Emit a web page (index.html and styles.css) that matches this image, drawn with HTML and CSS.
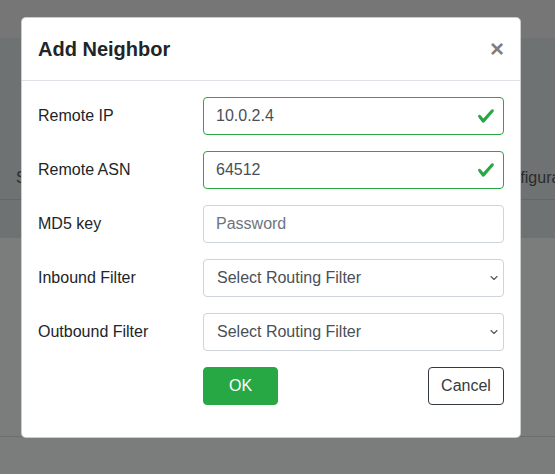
FILE: index.html
```html
<!DOCTYPE html>
<html lang="en">
<head>
<meta charset="utf-8">
<title>Add Neighbor</title>
<link rel="stylesheet" href="styles.css">
</head>
<body>
<div class="page">
  <div class="topbar"></div>
  <div class="hero">
    <div class="tabs">
      <span class="tab tab-first">Sessions</span>
      <span class="tab">Configuration</span>
    </div>
  </div>
  <div class="subbar"></div>
  <div class="lower"></div>
  <div class="footer"></div>
</div>

<div class="modal">
  <div class="modal-header">
    <h5 class="modal-title">Add Neighbor</h5>
    <button class="close" type="button">&times;</button>
  </div>
  <div class="modal-body">
    <div class="form-row">
      <label class="col-label">Remote IP</label>
      <div class="field">
        <input class="form-control is-valid" type="text" value="10.0.2.4">
        <svg class="valid-icon" viewBox="0 0 8 8" width="18" height="18"><path fill="#28a745" d="M2.3 6.73L.6 4.53c-.4-1.04.46-1.4 1.1-.8l1.1 1.4 3.4-3.8c.6-.63 1.6-.27 1.2.7l-4 4.6c-.43.5-.8.4-1.1.1z"/></svg>
      </div>
    </div>
    <div class="form-row">
      <label class="col-label">Remote ASN</label>
      <div class="field">
        <input class="form-control is-valid" type="text" value="64512">
        <svg class="valid-icon" viewBox="0 0 8 8" width="18" height="18"><path fill="#28a745" d="M2.3 6.73L.6 4.53c-.4-1.04.46-1.4 1.1-.8l1.1 1.4 3.4-3.8c.6-.63 1.6-.27 1.2.7l-4 4.6c-.43.5-.8.4-1.1.1z"/></svg>
      </div>
    </div>
    <div class="form-row">
      <label class="col-label">MD5 key</label>
      <div class="field">
        <input class="form-control" type="password" placeholder="Password">
      </div>
    </div>
    <div class="form-row">
      <label class="col-label">Inbound Filter</label>
      <div class="field">
        <select class="form-control custom-select"><option>Select Routing Filter</option></select>
        <svg class="chevron" viewBox="0 0 8 6" width="8" height="6"><path d="M1 1.5 L4 4.5 L7 1.5" fill="none" stroke="#555" stroke-width="1.1" stroke-linecap="round" stroke-linejoin="round"/></svg>
      </div>
    </div>
    <div class="form-row">
      <label class="col-label">Outbound Filter</label>
      <div class="field">
        <select class="form-control custom-select"><option>Select Routing Filter</option></select>
        <svg class="chevron" viewBox="0 0 8 6" width="8" height="6"><path d="M1 1.5 L4 4.5 L7 1.5" fill="none" stroke="#555" stroke-width="1.1" stroke-linecap="round" stroke-linejoin="round"/></svg>
      </div>
    </div>
    <div class="form-row">
      <div></div>
      <div class="actions">
        <button class="btn btn-success" type="button">OK</button>
        <button class="btn btn-outline-dark" type="button">Cancel</button>
      </div>
    </div>
  </div>
</div>
</body>
</html>
```

FILE: styles.css
```css
html, body {
  margin: 0;
  padding: 0;
}
body {
  width: 555px;
  height: 474px;
  overflow: hidden;
  position: relative;
  font-family: "Liberation Sans", Arial, sans-serif;
  font-size: 16px;
  line-height: 1.5;
  color: #212529;
  background: #7a7b7b;
}
.page {
  display: flex;
  flex-direction: column;
  height: 474px;
}
.topbar {
  height: 38px;
  background: #767676;
}
.hero {
  height: 161px;
  background: #6e7272;
  border-bottom: 1px solid #636767;
  display: flex;
  align-items: flex-end;
}
.tabs {
  display: flex;
  white-space: nowrap;
  padding: 0 0 9px 16px;
  color: #2a2c2c;
  font-size: 16px;
  line-height: 24px;
}
.tab-first {
  width: 475px;
}
.subbar {
  height: 38px;
  background: #6e7272;
}
.lower {
  height: 198px;
  background: #7b7c7c;
  border-bottom: 1px solid #6c6d6d;
}
.footer {
  flex: 1;
  background: #7b7c7c;
}

.modal {
  position: absolute;
  left: 21px;
  top: 17px;
  width: 500px;
  box-sizing: border-box;
  background: #fff;
  border: 1px solid rgba(0, 0, 0, 0.2);
  border-radius: 5px;
}
.modal-header {
  display: flex;
  align-items: flex-start;
  justify-content: space-between;
  padding: 16px;
  border-bottom: 1px solid #dee2e6;
}
.modal-title {
  margin: 0;
  font-size: 20px;
  line-height: 30px;
  font-weight: 700;
  color: #212529;
}
.close {
  background: transparent;
  border: 0;
  padding: 16px;
  margin: -16px -16px -16px auto;
  font-family: "Liberation Sans", Arial, sans-serif;
  font-size: 24px;
  font-weight: 700;
  line-height: 30px;
  color: #000;
  opacity: 0.5;
  cursor: pointer;
}
.modal-body {
  padding: 16px;
}
.form-row {
  display: grid;
  grid-template-columns: 165px 1fr;
  margin-bottom: 16px;
}
.col-label {
  padding: 7px 0;
  line-height: 24px;
  font-size: 16px;
}
.field {
  position: relative;
}
.form-control {
  display: block;
  width: 100%;
  box-sizing: border-box;
  height: 38px;
  padding: 6px 12px;
  font-family: "Liberation Sans", Arial, sans-serif;
  font-size: 16px;
  line-height: 24px;
  color: #495057;
  background: #fff;
  border: 1px solid #ced4da;
  border-radius: 4px;
  outline: none;
}
.form-control::placeholder {
  color: #6c757d;
}
.form-control.is-valid {
  border-color: #28a745;
  padding-right: 36px;
}
.valid-icon {
  position: absolute;
  right: 9px;
  top: 10px;
}
.custom-select {
  -webkit-appearance: none;
  appearance: none;
  padding-left: 13px;
}
.chevron {
  position: absolute;
  right: 6px;
  top: 16px;
}
.actions {
  display: flex;
  justify-content: space-between;
}
.btn {
  height: 38px;
  box-sizing: border-box;
  font-family: "Liberation Sans", Arial, sans-serif;
  font-size: 16px;
  line-height: 24px;
  padding: 6px 12px;
  border-radius: 4px;
  cursor: pointer;
}
.btn-success {
  width: 75px;
  color: #fff;
  background: #28a745;
  border: 1px solid #28a745;
}
.btn-outline-dark {
  width: 76px;
  color: #343a40;
  background: #fff;
  border: 1px solid #343a40;
}
```
